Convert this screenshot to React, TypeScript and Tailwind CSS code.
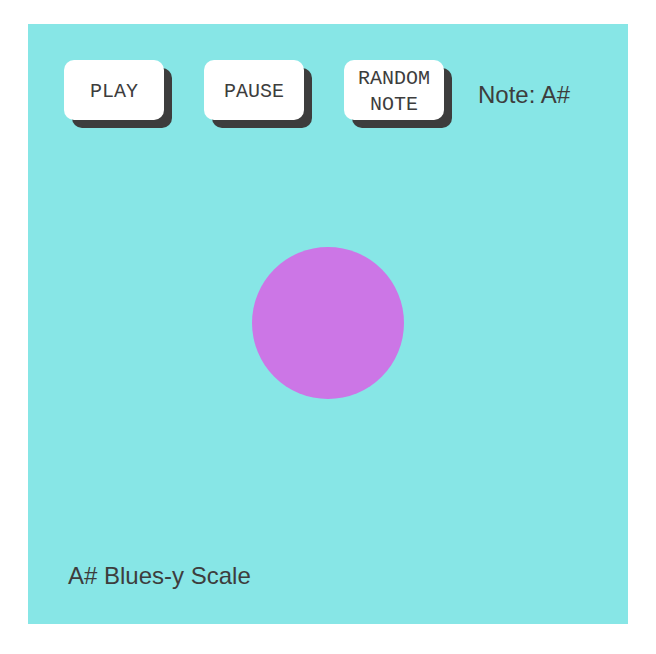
const buttons = [["PLAY"], ["PAUSE"], ["RANDOM", "NOTE"]];

const App = () => {
  return (
    <div className="min-h-screen bg-white pt-[24px] pl-[28px]">
      <div className="relative w-[600px] h-[600px] bg-[#87e6e6] flex flex-col justify-between">
        {/* top controls */}
        <div className="flex items-start pt-[36px] pl-[36px]">
          <div className="flex gap-[40px]">
            {buttons.map((lines) => (
              <button
                key={lines.join(" ")}
                className="w-[100px] h-[60px] pt-[3px] bg-white rounded-[10px] shadow-[8px_8px_0_#3d3d3d] flex flex-col items-center justify-center text-[#3d3d3d] text-[20px] leading-[26px]"
                style={{ fontFamily: '"Courier New", "Liberation Mono", monospace' }}
              >
                {lines.map((l) => (
                  <span key={l}>{l}</span>
                ))}
              </button>
            ))}
          </div>
          <span
            className="ml-[34px] pt-[23px] text-[24px] leading-[24px] text-[#3d3d3d]"
            style={{ fontFamily: '"Liberation Sans", Arial, sans-serif' }}
          >
            Note: A#
          </span>
        </div>

        {/* note circle */}
        <div className="absolute left-[224px] top-[223px] w-[152px] h-[152px] rounded-full bg-[#cc76e6]" />

        {/* scale label */}
        <div
          className="pl-[40px] pb-[36px] text-[24px] leading-[24px] text-[#3d3d3d]"
          style={{ fontFamily: '"Liberation Sans", Arial, sans-serif' }}
        >
          A# Blues-y Scale
        </div>
      </div>
    </div>
  );
};

export default App;
